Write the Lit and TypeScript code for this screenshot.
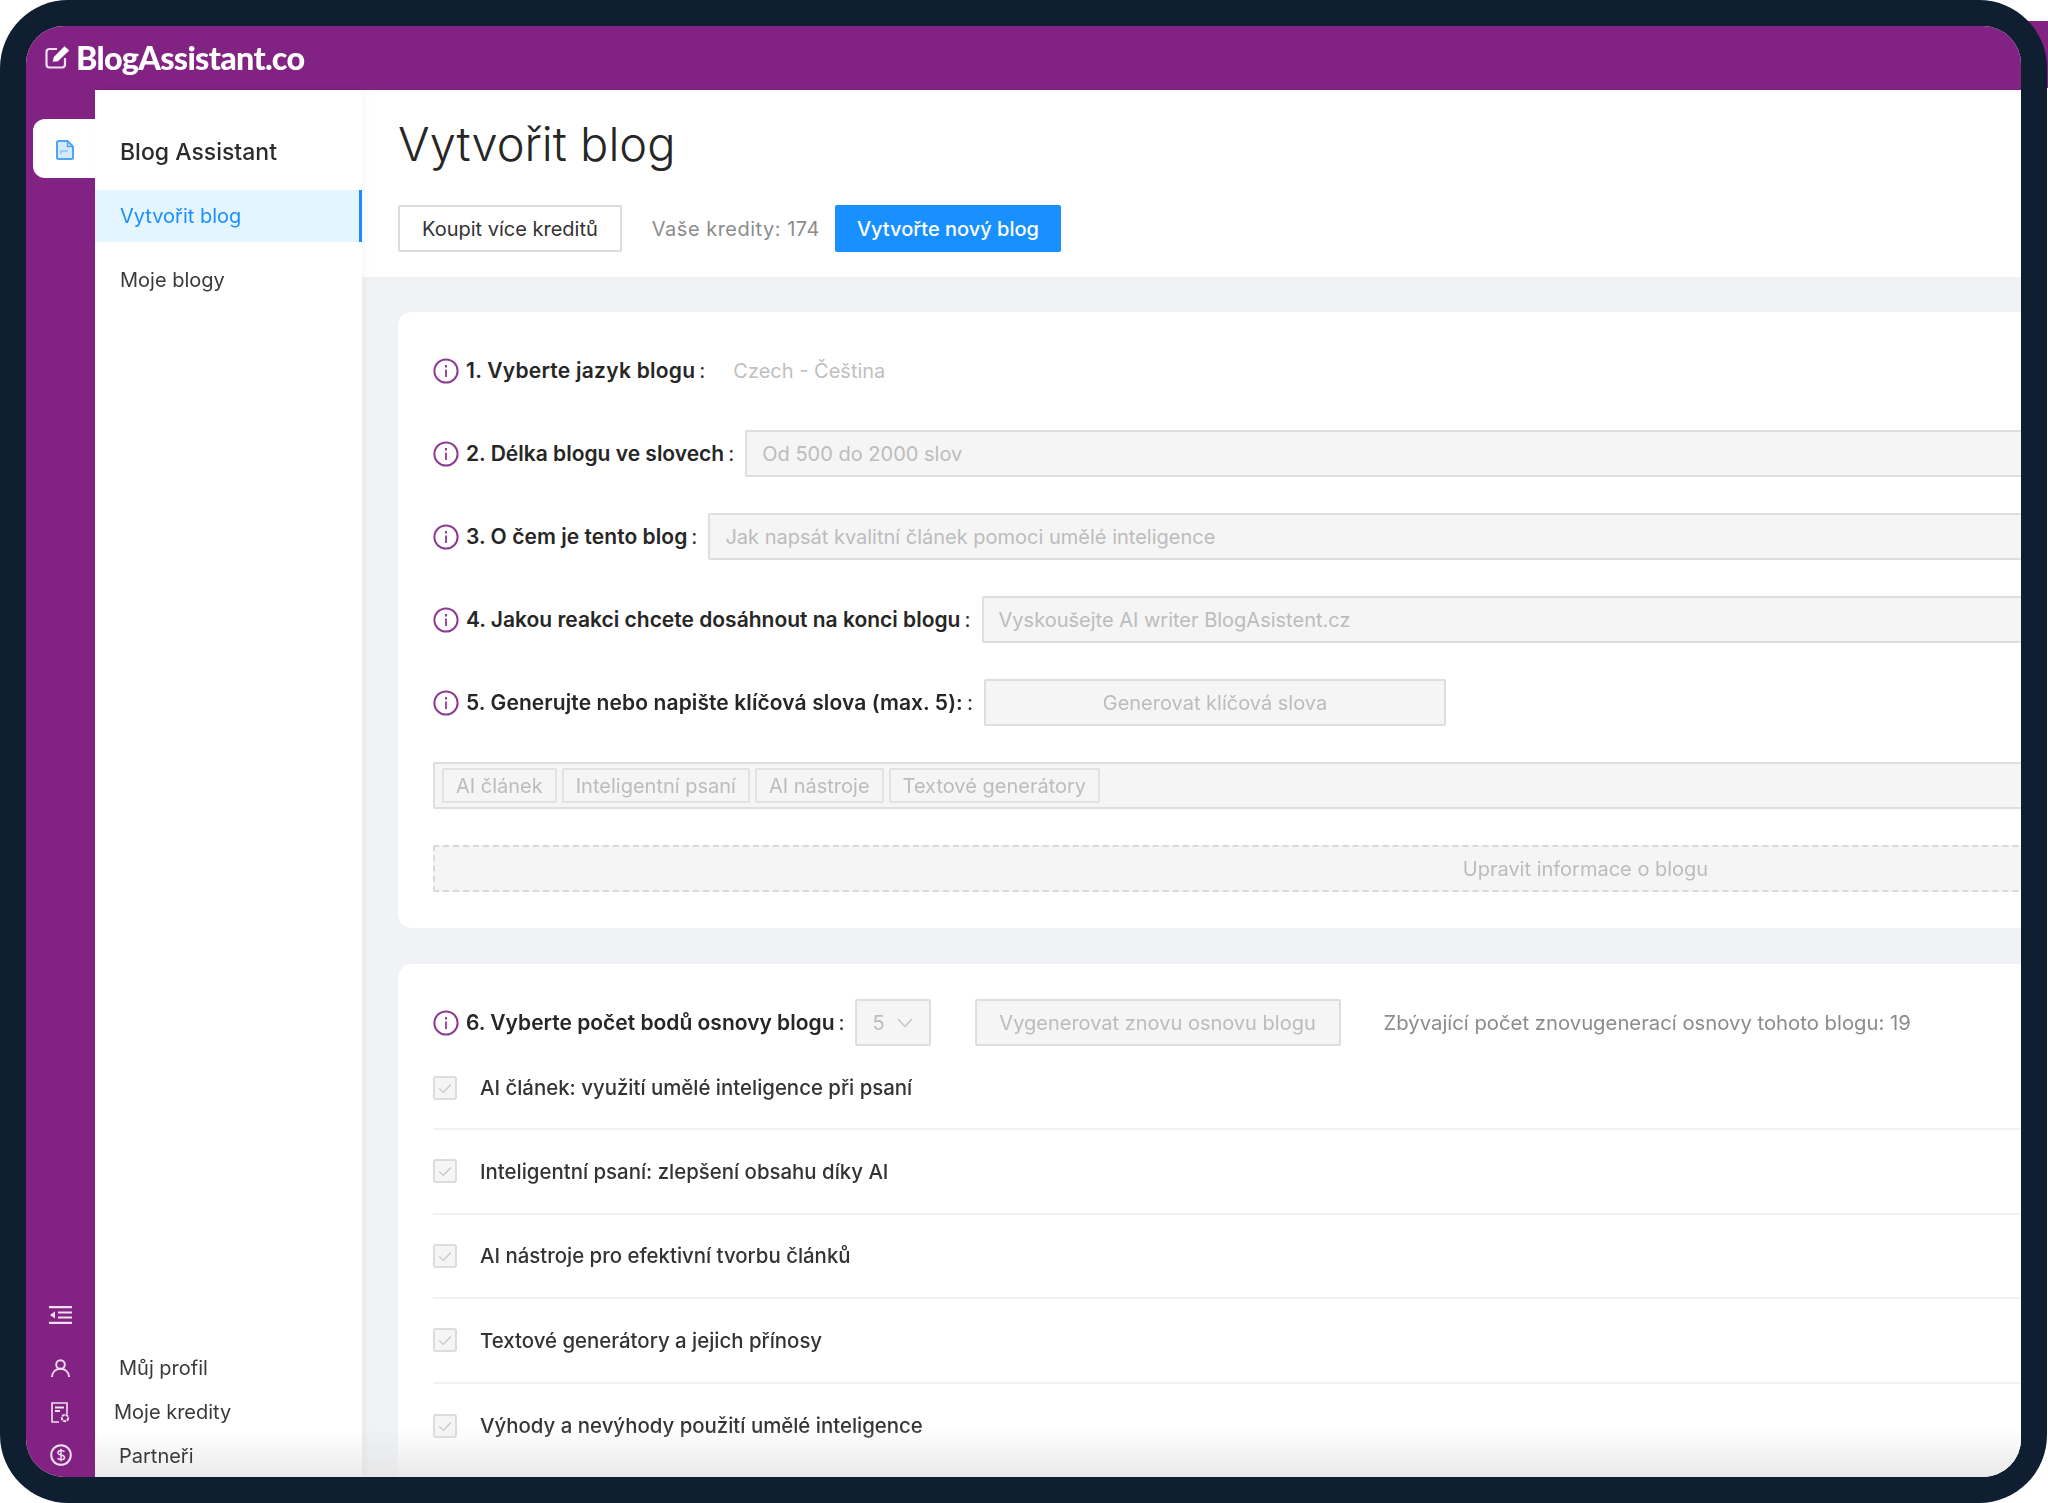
import { LitElement, html, css } from "lit";
import { customElement } from "lit/decorators.js";

const infoIcon = html`<svg class="info" viewBox="0 0 26 26" fill="none" stroke="#8e3a92" stroke-width="2"><circle cx="13" cy="13" r="11.6"/><path d="M13 11.5v7.5" stroke-width="1.8"/><path d="M13 7v2.4" stroke-width="2"/></svg>`;
const checkIcon = html`<svg class="chk" viewBox="0 0 24 24" fill="none" stroke="#c4c4c4" stroke-width="1.4"><path d="M5 12.4l5 5 9-9.600"/></svg>`;

@customElement("app-root")
export class AppRoot extends LitElement {
  static styles = css`
    :host { display: block; width: 2048px; height: 1503px; background: #fff; position: relative; overflow: hidden;
      font-family: Inter, "Noto Sans", sans-serif; color: #262626; }
    .tr { position: absolute; right: 0; top: 21px; width: 40px; height: 67px; background: #822282; }
    .device { position: relative; box-sizing: border-box; width: 2047px; height: 1503px; padding: 26px; background: #0f1f31; border-radius: 68px; }
    .win { height: 100%; border-radius: 38px; overflow: hidden; display: flex; flex-direction: column; position: relative; background: #fff; filter: blur(0.45px); }
    .top { flex: none; height: 64px; background: #822282; display: flex; align-items: center; padding: 0 0 2px 19px; box-sizing: border-box; gap: 6px; color: #fff; }
    .logo { font-family: Lato, sans-serif; font-weight: 900; font-size: 32.3px; letter-spacing: -0.7px; color: #fff; }
    .body { flex: 1; display: flex; min-height: 0; }
    .rail { flex: none; width: 69px; background: #822282; display: flex; flex-direction: column; align-items: center; padding: 29px 0 11px; box-sizing: border-box; }
    .tab { align-self: flex-end; width: 62px; height: 59px; background: #fff; border-radius: 12px 0 0 12px; display: flex; padding: 21px 0 0 23px; box-sizing: border-box; }
    .railsp { flex: 1; }
    .ri { display: block; flex: none; }
    .ri.list { margin-bottom: 35px; }
    .ri.user { margin-bottom: 25px; }
    .ri.doc { margin-bottom: 21px; }
    .side { flex: none; width: 267px; background: linear-gradient(to bottom, #fff calc(100% - 46px), #ebebeb); display: flex; flex-direction: column; position: relative; z-index: 1; box-shadow: 3px 0 8px rgba(0,0,0,.035); }
    .brand { font-size: 23px; font-weight: 500; color: #2b2b2b; padding: 47px 0 0 25px; height: 76px; box-sizing: border-box; line-height: 30px; }
    .item { font-size: 20px; height: 52px; line-height: 52px; padding-left: 25px; box-sizing: border-box; color: #3a3a3a; }
    .item.on { background: #e4f5ff; color: #1b8ffb; border-right: 3px solid #1a8cff; margin-top: 24px; }
    .item.two { margin-top: 12px; }
    .sidesp { flex: 1; }
    .foot { font-size: 20px; color: #3a3a3a; padding-left: 24px; line-height: 30px; display: flex; flex-direction: column; gap: 14px; padding-bottom: 6px; }
    .foot .in { margin-left: -5px; }
    .main { flex: 1; min-width: 0; overflow: hidden; background: #f0f2f5; }
    .phead { background: #fff; height: 187px; padding: 26px 0 0 36px; box-sizing: border-box; }
    h1 { margin: 0; font-size: 47px; font-weight: 300; line-height: 56px; color: #262626; }
    .bar { margin-top: 33px; display: flex; align-items: center; }
    .btn { box-sizing: border-box; height: 47px; border: 2px solid #dcdcdc; background: #fff; font-size: 20px; color: #333; padding: 0 22px; display: flex; align-items: center; border-radius: 2px; }
    .cred { font-size: 20px; letter-spacing: 0.5px; color: #8c8c8c; margin: 0 15px 0 30px; }
    .btn.pri { background: #1890ff; border-color: #1890ff; color: #fff; font-weight: 500; padding: 0 20px; }
    .cards { padding: 35px 0 0 36px; width: 2340px; display: flex; flex-direction: column; gap: 36px; }
    .card { background: #fff; border-radius: 14px 0 0 14px; padding: 35px 0 36px 35px; display: flex; flex-direction: column; gap: 36px; }
    .card.b { gap: 0; padding-bottom: 40px; }
    .row { display: flex; align-items: center; height: 47px; flex: none; }
    .info { width: 26px; height: 26px; flex: none; margin-right: 7px; }
    .lab { font-size: 21px; font-weight: 600; color: #262626; white-space: nowrap; }
    .lab.w1 { letter-spacing: 0.25px; }
    .lab.w3 { letter-spacing: 0.05px; }
    .lab.w5 { letter-spacing: 0.1px; }
    .colon { font-size: 21px; margin: 0 11px 0 4px; color: #333; }
    .colon.tight { margin-right: 10px; }
    .fld { flex: 1; box-sizing: border-box; height: 47px; border: 2px solid #dedede; background: #f5f5f5; border-radius: 2px; font-size: 20px; color: #bcbcbc; display: flex; align-items: center; padding: 0 15px; white-space: nowrap; }
    .plain { font-size: 20px; color: #bfbfbf; margin-left: 17px; }
    .gen { flex: none; width: 462px; justify-content: center; }
    .tags { flex: none; padding: 0 7px; gap: 5px; }
    .tag { box-sizing: border-box; height: 35px; border: 2px solid #e2e2e2; border-radius: 2px; padding: 0 12px; display: flex; align-items: center; color: #bcbcbc; font-size: 20px; }
    .dash { flex: none; height: 47px; border: 2px dashed #d9d9d9; justify-content: center; }
    .sel { flex: none; width: 76px; padding: 0 16px; justify-content: space-between; }
    .regen { flex: none; width: 366px; padding: 0; justify-content: center; margin-left: 44px; }
    .left { font-size: 20.3px; color: #8c8c8c; margin-left: 43px; white-space: nowrap; }
    .opt { display: flex; align-items: center; height: 84.5px; border-bottom: 2px solid #f2f2f2; box-sizing: border-box; }
    .opt.first { height: 84px; padding-top: 1px; }
    .opt:last-child { border-bottom: 0; }
    .cb { box-sizing: border-box; flex: none; width: 24px; height: 24px; border: 2px solid #dcdcdc; background: #f5f5f5; border-radius: 3px; display: flex; align-items: center; justify-content: center; margin-right: 23px; }
    .chk { width: 20px; height: 20px; }
    .opt span { font-size: 20.4px; font-weight: 500; color: #333; }
    .fade { position: absolute; left: 336px; right: 0; bottom: 0; height: 50px; background: linear-gradient(to bottom, rgba(228,228,228,0), rgba(228,228,228,0.8)); pointer-events: none; }
  `;

  render() {
    const opts = [
      "AI článek: využití umělé inteligence při psaní",
      "Inteligentní psaní: zlepšení obsahu díky AI",
      "AI nástroje pro efektivní tvorbu článků",
      "Textové generátory a jejich přínosy",
      "Výhody a nevýhody použití umělé inteligence",
    ];
    return html`
      <div class="tr"></div>
      <div class="device">
        <div class="win">
          <div class="top">
            <svg width="25" height="24" viewBox="0 0 25 24" fill="none" stroke="#f0dff0" stroke-width="2.2"><path d="M20 13v6.500a3 3 0 0 1-3 3H4.500a3 3 0 0 1-3-3V7a3 3 0 0 1 3-3H12"/><path d="M8 16.500l1-4.500L19.500 1.500 24 5.500 13 16z" fill="#ffffff" stroke-width=".6"/></svg>
            <span class="logo">BlogAssistant.co</span>
          </div>
          <div class="body">
            <div class="rail">
              <div class="tab">
                <svg width="18" height="20" viewBox="0 0 18 20" fill="none" stroke="#4ea5f7" stroke-width="2"><path d="M2.500 1h9L17 6.500v11A1.500 1.500 0 0 1 15.500 19h-13A1.500 1.500 0 0 1 1 17.500v-15A1.500 1.500 0 0 1 2.500 1z" fill="#d5eafd"/><path d="M11.500 1v5.500H17" stroke-width="1.500"/><path d="M5 14v-3h7" stroke-width="1.500" stroke="#8cc4f9"/></svg>
              </div>
              <div class="railsp"></div>
              <svg class="ri list" width="23" height="18" viewBox="0 0 23 18" fill="none" stroke="#f0dff0" stroke-width="2.200"><path d="M0 1.100h23M9 6.500h14M9 11.500h14M0 16.900h23"/><path d="M6 5.500v7L1 9z" fill="#f0dff0" stroke="none"/></svg>
              <svg class="ri user" width="19" height="18" viewBox="0 0 19 18" fill="none" stroke="#f0dff0" stroke-width="1.900"><circle cx="9.500" cy="5.500" r="4.300"/><path d="M1 17.500c.5-4.500 3.800-7.700 8.500-7.700s8 3.200 8.500 7.700" stroke-linecap="round"/></svg>
              <svg class="ri doc" width="19" height="21" viewBox="0 0 19 21" fill="none" stroke="#f0dff0" stroke-width="1.600"><path d="M8 20H1V1h15v11"/><path d="M4 5.500h9M4 9h5" stroke-width="1.800"/><circle cx="14" cy="16" r="3.200" stroke-width="2" stroke-dasharray="3 .8"/></svg>
              <svg class="ri" width="22" height="22" viewBox="0 0 22 22" fill="none" stroke="#f0dff0" stroke-width="2"><circle cx="11" cy="11" r="9.800"/><path d="M14.500 7.800c-.7-1-1.900-1.400-3.400-1.400-1.900 0-3.200 1-3.200 2.300 0 3.200 6.600 1.400 6.600 4.700 0 1.400-1.400 2.300-3.400 2.300-1.500 0-2.800-.5-3.500-1.400M11 4.800v12.400" stroke-width="1.500"/></svg>
            </div>
            <div class="side">
              <div class="brand">Blog Assistant</div>
              <div class="item on">Vytvořit blog</div>
              <div class="item two">Moje blogy</div>
              <div class="sidesp"></div>
              <div class="foot">
                <div>Můj profil</div>
                <div class="in">Moje kredity</div>
                <div>Partneři</div>
              </div>
            </div>
            <div class="main">
              <div class="phead">
                <h1>Vytvořit blog</h1>
                <div class="bar">
                  <div class="btn">Koupit více kreditů</div>
                  <div class="cred">Vaše kredity: 174</div>
                  <div class="btn pri">Vytvořte nový blog</div>
                </div>
              </div>
              <div class="cards">
                <div class="card">
                  <div class="row">${infoIcon}<span class="lab w1">1. Vyberte jazyk blogu</span><span class="colon">:</span><span class="plain">Czech - Čeština</span></div>
                  <div class="row">${infoIcon}<span class="lab">2. Délka blogu ve slovech</span><span class="colon">:</span><div class="fld">Od 500 do 2000 slov</div></div>
                  <div class="row">${infoIcon}<span class="lab w3">3. O čem je tento blog</span><span class="colon">:</span><div class="fld">Jak napsát kvalitní článek pomoci umělé inteligence</div></div>
                  <div class="row">${infoIcon}<span class="lab">4. Jakou reakci chcete dosáhnout na konci blogu</span><span class="colon">:</span><div class="fld">Vyskoušejte AI writer BlogAsistent.cz</div></div>
                  <div class="row">${infoIcon}<span class="lab w5">5. Generujte nebo napište klíčová slova (max. 5):</span><span class="colon">:</span><div class="fld gen">Generovat klíčová slova</div></div>
                  <div class="fld tags">
                    <div class="tag">AI článek</div><div class="tag">Inteligentní psaní</div><div class="tag">AI nástroje</div><div class="tag">Textové generátory</div>
                  </div>
                  <div class="fld dash">Upravit informace o blogu</div>
                </div>
                <div class="card b">
                  <div class="row">${infoIcon}<span class="lab">6. Vyberte počet bodů osnovy blogu</span><span class="colon tight">:</span>
                    <div class="fld sel">5<svg width="16" height="10" viewBox="0 0 16 10" fill="none" stroke="#c4c4c4" stroke-width="1.500"><path d="M1 1l7 7.500 7-7.500"/></svg></div>
                    <div class="fld regen">Vygenerovat znovu osnovu blogu</div>
                    <div class="left">Zbývající počet znovugenerací osnovy tohoto blogu: 19</div>
                  </div>
                  ${opts.map((o, i) => html`<div class="opt ${i === 0 ? "first" : ""}"><div class="cb">${checkIcon}</div><span>${o}</span></div>`)}
                </div>
              </div>
            </div>
          </div>
          <div class="fade"></div>
        </div>
      </div>
    `;
  }
}
